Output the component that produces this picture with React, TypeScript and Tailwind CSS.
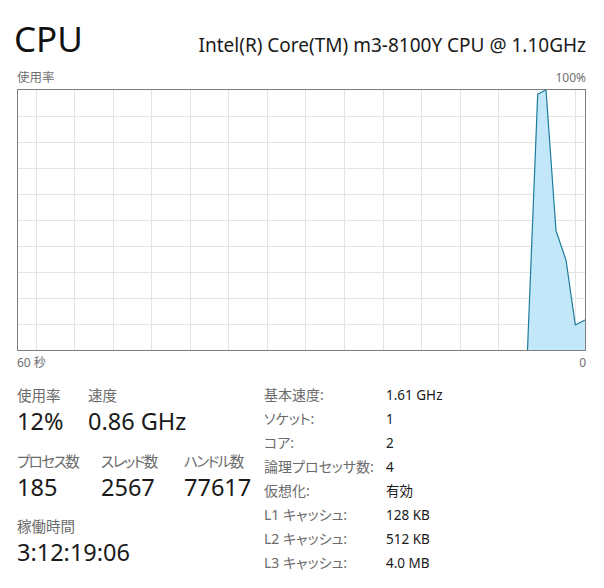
const font = { fontFamily: '"Noto Sans", "Noto Sans CJK JP", sans-serif' }

const specs = [
  ['基本速度:', '1.61 GHz'],
  ['ソケット:', '1'],
  ['コア:', '2'],
  ['論理プロセッサ数:', '4'],
  ['仮想化:', '有効'],
  ['L1 キャッシュ:', '128 KB'],
  ['L2 キャッシュ:', '512 KB'],
  ['L3 キャッシュ:', '4.0 MB'],
]

function Chart() {
  const w = 569
  const h = 262
  const cols = Array.from({ length: 15 }, (_, i) => 18.5 + i * 38.57)
  const rows = Array.from({ length: 9 }, (_, i) => 27 + i * 26)
  const line = '510.5,261 520.7,5.3 529,0.8 539,141.7 549,171 558.3,236 568,231'
  return (
    <svg width={w} height={h} viewBox={`0 0 ${w} ${h}`} className="block">
      <rect x="0" y="0" width={w} height={h} fill="#ffffff" />
      {cols.map(x => (
        <line key={'c' + x} x1={Math.round(x) + 0.5} y1="1" x2={Math.round(x) + 0.5} y2={h - 1} stroke="#e4e4e4" strokeWidth="1" />
      ))}
      {rows.map(y => (
        <line key={'r' + y} x1="1" y1={y + 0.5} x2={w - 1} y2={y + 0.5} stroke="#e4e4e4" strokeWidth="1" />
      ))}
      <polygon points={`${line} 568,261`} fill="#c2e7f8" />
      <polyline points={line} fill="none" stroke="#1d7c9c" strokeWidth="1.2" strokeLinejoin="round" />
      <rect x="0.5" y="0.5" width={w - 1} height={h - 1} fill="none" stroke="#7f7f7f" strokeWidth="1" />
    </svg>
  )
}

function Stat({ label, value, width, kana }: { label: string; value: string; width: string; kana?: boolean }) {
  return (
    <div className={width}>
      <div className={kana
        ? "text-[14.5px] leading-[24px] tracking-[-1.5px] text-[#6b6b6b] [font-feature-settings:'palt']"
        : "text-[14.5px] leading-[24px] text-[#6b6b6b]"}>{label}</div>
      <div className="text-[23.5px] leading-[28px] text-[#1a1a1a]">{value}</div>
    </div>
  )
}

export default function App() {
  return (
    <div style={font} className="h-[588px] w-[604px] overflow-hidden bg-white pl-[17px] pr-[18px] pt-[19px]">
      <div className="flex items-baseline justify-between">
        <span className="-ml-[3px] text-[35px] leading-[40px] text-[#111111]">CPU</span>
        <span className="text-[19px] leading-[24px] text-[#1a1a1a]">Intel(R) Core(TM) m3-8100Y CPU @ 1.10GHz</span>
      </div>

      <div className="mt-[11px] flex justify-between text-[12.5px] leading-[16px] text-[#707070]">
        <span>使用率</span>
        <span className="text-[12px]">100%</span>
      </div>

      <div className="mt-[3px]">
        <Chart />
      </div>

      <div className="mt-[4px] flex justify-between text-[12px] leading-[16px] text-[#707070]">
        <span>60 秒</span>
        <span>0</span>
      </div>

      <div className="mt-[12px] flex">
        <div className="w-[247px]">
          <div className="flex">
            <Stat label="使用率" value="12%" width="w-[71px]" />
            <Stat label="速度" value="0.86 GHz" width="w-[120px]" />
          </div>
          <div className="mt-[14px] flex">
            <Stat label="プロセス数" value="185" width="w-[84px]" kana />
            <Stat label="スレッド数" value="2567" width="w-[83px]" kana />
            <Stat label="ハンドル数" value="77617" width="w-[80px]" kana />
          </div>
          <div className="mt-[13px]">
            <Stat label="稼働時間" value="3:12:19:06" width="w-[200px]" />
          </div>
        </div>

        <div className="flex flex-col">
          {specs.map(([k, v]) => (
            <div key={k} className="flex text-[13.5px] leading-[24px]">
              <span className="w-[122px] text-[14px] text-[#6b6b6b] [font-feature-settings:'palt']">{k}</span>
              <span className="text-[#1a1a1a]">{v}</span>
            </div>
          ))}
        </div>
      </div>
    </div>
  )
}
